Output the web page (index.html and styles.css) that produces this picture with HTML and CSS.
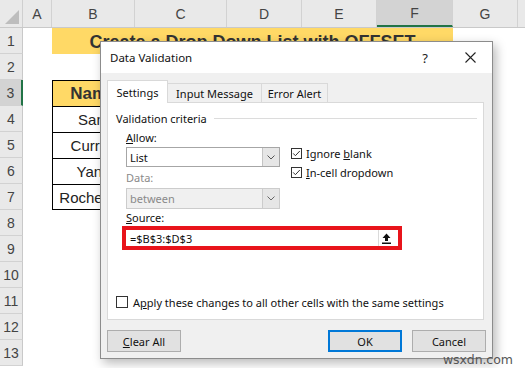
FILE: index.html
```html
<!DOCTYPE html>
<html>
<head>
<meta charset="utf-8">
<link rel="stylesheet" href="styles.css">
</head>
<body>
<div class="sheet">
  <div class="row hdr">
    <div class="corner"><span class="tri"></span></div>
    <div class="ch cA">A</div>
    <div class="ch cB">B</div>
    <div class="ch cC">C</div>
    <div class="ch cD">D</div>
    <div class="ch cE">E</div>
    <div class="ch cF sel">F</div>
    <div class="ch cG">G</div>
    <div class="ch rest"></div>
  </div>
  <div class="row">
    <div class="rh">1</div><div class="cA"></div>
    <div class="title">Create a Drop Down List with OFFSET</div>
  </div>
  <div class="row"><div class="rh">2</div></div>
  <div class="row">
    <div class="rh sel">3</div><div class="cA"></div>
    <div class="tc cB head">Name</div><div class="tc cCD head"></div>
  </div>
  <div class="row">
    <div class="rh">4</div><div class="cA"></div>
    <div class="tc cB">Sam</div><div class="tc cCD"></div>
  </div>
  <div class="row">
    <div class="rh">5</div><div class="cA"></div>
    <div class="tc cB">Curran</div><div class="tc cCD"></div>
  </div>
  <div class="row">
    <div class="rh">6</div><div class="cA"></div>
    <div class="tc cB">Yang</div><div class="tc cCD"></div>
  </div>
  <div class="row">
    <div class="rh">7</div><div class="cA"></div>
    <div class="tc cB last">Rochester</div><div class="tc cCD last"></div>
  </div>
  <div class="row"><div class="rh">8</div></div>
  <div class="row"><div class="rh">9</div></div>
  <div class="row"><div class="rh">10</div></div>
  <div class="row"><div class="rh">11</div></div>
  <div class="row"><div class="rh">12</div></div>
  <div class="row"><div class="rh">13</div></div>
</div>

<div class="dialog">
  <div class="titlebar">
    <span class="dtitle">Data Validation</span>
    <span class="help">?</span>
    <svg class="close" width="11" height="11" viewBox="0 0 11 11"><path d="M0.5 0.5 L10.5 10.5 M10.5 0.5 L0.5 10.5" stroke="#222" stroke-width="1.1" fill="none"/></svg>
  </div>
  <div class="dbody">
    <div class="tabs">
      <div class="tab active">Settings</div>
      <div class="tab tab-im">Input Message</div>
      <div class="tab tab-ea">Error Alert</div>
    </div>
    <div class="panel">
      <div class="legend"><span>Validation criteria</span><span class="rule"></span></div>
      <div class="criteria">
        <div class="leftcol">
          <div class="lbl"><u>A</u>llow:</div>
          <div class="select">
            <span class="val">List</span>
            <span class="dd"><svg width="8" height="5" viewBox="0 0 8 5"><path d="M0.5 0.5 L4 4 L7.5 0.5" stroke="#555" fill="none"/></svg></span>
          </div>
          <div class="lbl dis lbl-data">Data:</div>
          <div class="select dis">
            <span class="val">between</span>
            <span class="dd"><svg width="8" height="5" viewBox="0 0 8 5"><path d="M0.5 0.5 L4 4 L7.5 0.5" stroke="#666" fill="none"/></svg></span>
          </div>
        </div>
        <div class="rightcol">
          <div class="chk">
            <svg class="box" width="11" height="11" viewBox="0 0 11 11"><rect x="0.5" y="0.5" width="10" height="10" fill="#fff" stroke="#333"/><path d="M2.2 5.4 L4.4 7.7 L8.8 3" stroke="#333" stroke-width="1" fill="none"/></svg>
            <span>Ignore <u>b</u>lank</span>
          </div>
          <div class="chk">
            <svg class="box" width="11" height="11" viewBox="0 0 11 11"><rect x="0.5" y="0.5" width="10" height="10" fill="#fff" stroke="#333"/><path d="M2.2 5.4 L4.4 7.7 L8.8 3" stroke="#333" stroke-width="1" fill="none"/></svg>
            <span><u>I</u>n-cell dropdown</span>
          </div>
        </div>
      </div>
      <div class="lbl lbl-src"><u>S</u>ource:</div>
      <div class="source">
        <span class="val">=$B$3:$D$3</span>
        <span class="refbtn"><svg width="9" height="11" viewBox="0 0 9 11"><path d="M4.5 0.5 L8.5 5 H6 V8 H3 V5 H0.5 Z" fill="#111"/><rect x="0" y="9.5" width="9" height="1.5" fill="#111"/></svg></span>
      </div>
      <div class="apply">
        <svg class="box" width="12" height="12" viewBox="0 0 12 12"><rect x="0.5" y="0.5" width="11" height="11" fill="#fff" stroke="#333"/></svg>
        <span>A<u>p</u>ply these changes to all other cells with the same settings</span>
      </div>
    </div>
    <div class="buttons">
      <div class="btn"><u>C</u>lear All</div>
      <div class="spacer"></div>
      <div class="btn ok">OK</div>
      <div class="btn">Cancel</div>
    </div>
  </div>
</div>

<div class="watermark">wsxdn.com</div>
</body>
</html>
```

FILE: styles.css
```css
* { box-sizing: border-box; }
html, body { margin: 0; padding: 0; }
body {
  width: 525px;
  height: 368px;
  overflow: hidden;
  position: relative;
  background: #fff;
  font-family: "Liberation Sans", Arial, sans-serif;
}

/* ---------- spreadsheet ---------- */
.sheet { display: flex; flex-direction: column; }
.row { display: flex; height: 26px; flex: none; }
.row.hdr { height: 28px; background: #e9e9e9; border-bottom: 1px solid #c9c9c9; }

.corner { width: 23px; height: 100%; position: relative; border-right: 1px solid #cfcfcf; }
.tri {
  position: absolute; right: 3px; bottom: 3px;
  width: 0; height: 0;
  border-left: 14px solid transparent;
  border-bottom: 14px solid #bdbdbd;
}
.ch {
  height: 100%;
  display: flex; align-items: center; justify-content: center;
  font-size: 14px; color: #444;
  border-right: 1px solid #d2d2d2;
  padding-top: 1px;
}
.ch.sel { background: #d3d3d3; border-bottom: 2px solid #217346; }
.ch.rest { flex: 1; border-right: none; }

.cA { width: 29px; flex: none; }
.cB { width: 83px; flex: none; }
.cC { width: 92px; flex: none; }
.cD { width: 75px; flex: none; }
.cE { width: 75px; flex: none; }
.cF { width: 76px; flex: none; }
.cG { width: 65px; flex: none; }
.cCD { width: 167px; flex: none; }

.rh {
  width: 23px; flex: none; height: 100%;
  background: #e9e9e9;
  border-right: 1px solid #c9c9c9;
  border-bottom: 1px solid #d2d2d2;
  display: flex; align-items: center; justify-content: center;
  font-size: 14px; color: #444;
}
.rh.sel { background: #d3d3d3; border-right: 2px solid #217346; }

.title {
  width: 401px; flex: none;
  background: #ffd966;
  font-weight: bold; font-size: 18px; color: #333;
  display: flex; align-items: center; justify-content: center;
  padding-top: 2px;
}

.tc {
  height: 26px;
  border-left: 1px solid #000;
  border-right: 1px solid #000;
  border-top: 1px solid #000;
  display: flex; align-items: center; justify-content: center;
  font-size: 15px; color: #222;
  white-space: nowrap; overflow: hidden;
}
.tc + .tc { border-left: none; }
.tc.head { background: #ffd966; font-weight: bold; font-size: 17px; color: #333; }
.tc.last { border-bottom: 1px solid #000; }

/* ---------- dialog ---------- */
.dialog {
  position: absolute;
  left: 100px; top: 41px;
  width: 393px; height: 318px;
  border: 1px solid #8c8c8c;
  background: #f0f0f0;
  box-shadow: 3px 4px 10px rgba(0, 0, 0, 0.28);
  display: flex; flex-direction: column;
  font-family: "Noto Sans", "Open Sans", sans-serif;
  font-size: 11px;
  color: #111;
}
.titlebar {
  height: 31px; flex: none;
  background: #fff;
  display: flex; align-items: center;
  padding-left: 9px;
}
.dtitle { font-size: 11.5px; color: #111; flex: 1; }
.help { font-size: 13px; color: #222; width: 16px; text-align: center; margin-right: 32px; }
.close { margin-right: 16px; }

.dbody { flex: 1; padding: 7px 6px 7px 6px; display: flex; flex-direction: column; }

.tabs { display: flex; align-items: flex-end; height: 22px; flex: none; }
.tab {
  height: 19px;
  border: 1px solid #d9d9d9; border-bottom: none;
  background: #f0f0f0;
  display: flex; align-items: center; justify-content: center;
  margin-left: -1px;
  padding-top: 1px;
}
.tab.active {
  height: 23px; margin-bottom: -1px;
  width: 61px; margin-left: 0;
  background: #fff;
  position: relative; z-index: 1;
}
.tab-im { width: 95px; }
.tab-ea { width: 67px; }

.panel {
  width: 377px; height: 218px; flex: none;
  background: #fff;
  border: 1px solid #d9d9d9;
  padding: 0 0 0 8px;
  display: flex; flex-direction: column;
}
.legend {
  display: flex; align-items: center;
  height: 14px; margin-top: 8px;
  width: 361px;
}
.legend .rule { flex: 1; height: 1px; background: #dcdcdc; margin-left: 7px; }

.criteria { display: flex; margin-left: 10px; margin-top: 6px; }
.leftcol { width: 154px; display: flex; flex-direction: column; }
.lbl { height: 14px; line-height: 14px; }
.lbl.dis { color: #8a8a8a; }
.lbl-data { margin-top: 4px; }

.select {
  height: 20px; margin-top: 2px;
  border: 1px solid #a6a6a6;
  background: #fff;
  display: flex; align-items: center;
}
.select .val { flex: 1; padding-left: 3px; }
.select .dd {
  width: 17px; height: 100%;
  background: #e6e6e6;
  border-left: 1px solid #c4c4c4;
  display: flex; align-items: center; justify-content: center;
}
.select.dis { height: 21px; margin-top: 3px; background: #f0f0f0; border-color: #cccccc; color: #8a8a8a; }
.select.dis .dd { background: #e6e6e6; border-left-color: #cccccc; }

.rightcol { margin-left: 11px; margin-top: 13px; display: flex; flex-direction: column; }
.chk { display: flex; align-items: center; height: 19px; }
.chk .box { margin-right: 4px; flex: none; }

.lbl-src { margin-left: 10px; margin-top: 2px; }
.source {
  margin-left: 6px; margin-top: 1px;
  width: 280px; height: 24px;
  border: 4px solid #e8141b;
  background: #fff;
  display: flex; align-items: center;
}
.source .val { flex: 1; padding-left: 4px; }
.source .refbtn {
  width: 16px; height: 16px; margin-right: 4px;
  background: #fff;
  border-left: 1px solid #dadada;
  display: flex; align-items: center; justify-content: center;
}

.apply { display: flex; align-items: center; margin-top: 45px; height: 14px; }
.apply .box { margin-right: 5px; flex: none; }

.buttons { display: flex; margin-top: 10px; height: 22px; flex: none; }
.spacer { flex: 1; }
.btn {
  width: 74px; height: 22px;
  background: #e1e1e1;
  border: 1px solid #adadad;
  display: flex; align-items: center; justify-content: center;
}
.btn.ok { border: 2px solid #0078d7; margin-right: 10px; }

.watermark {
  position: absolute;
  left: 443px; top: 352px;
  font-family: "DejaVu Sans", sans-serif;
  font-size: 12.5px;
  color: #555;
  letter-spacing: -0.1px;
}
```
